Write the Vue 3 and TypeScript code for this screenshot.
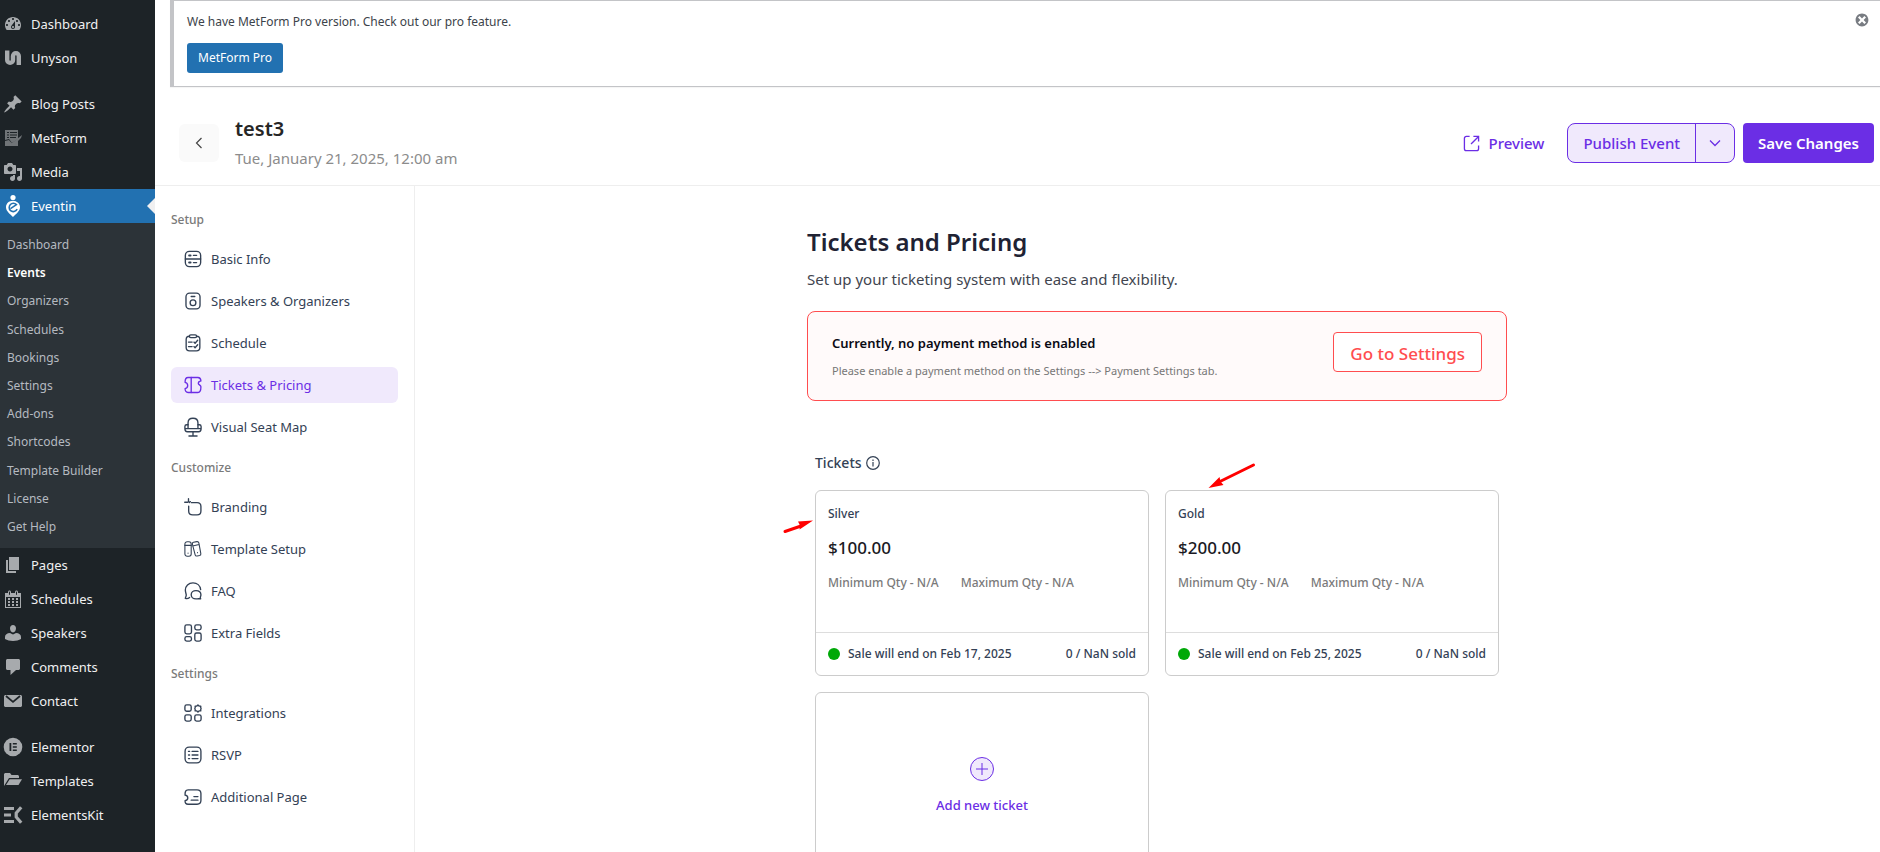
<script setup lang="ts">
interface AdminItem {
  label: string
  icon: string
  startsGroup?: boolean
  active?: boolean
}
interface Step {
  label: string
  icon: string
  active?: boolean
}
interface StepGroup {
  title: string
  steps: Step[]
}
interface Ticket {
  name: string
  price: string
  saleEnd: string
  arrow: string
}

const adminTop: AdminItem[] = [
  { label: 'Dashboard', icon: 'gauge' },
  { label: 'Unyson', icon: 'unyson' },
  { label: 'Blog Posts', icon: 'pin', startsGroup: true },
  { label: 'MetForm', icon: 'metform' },
  { label: 'Media', icon: 'media' },
  { label: 'Eventin', icon: 'eventin', active: true },
]

const eventinMenu: string[] = [
  'Dashboard', 'Events', 'Organizers', 'Schedules', 'Bookings', 'Settings',
  'Add-ons', 'Shortcodes', 'Template Builder', 'License', 'Get Help',
]

const adminBottom: AdminItem[] = [
  { label: 'Pages', icon: 'pages' },
  { label: 'Schedules', icon: 'calendar' },
  { label: 'Speakers', icon: 'person' },
  { label: 'Comments', icon: 'comment' },
  { label: 'Contact', icon: 'mail' },
  { label: 'Elementor', icon: 'elementor', startsGroup: true },
  { label: 'Templates', icon: 'folder' },
  { label: 'ElementsKit', icon: 'elementskit' },
]

const stepGroups: StepGroup[] = [
  {
    title: 'Setup',
    steps: [
      { label: 'Basic Info', icon: 'basic' },
      { label: 'Speakers & Organizers', icon: 'speaker' },
      { label: 'Schedule', icon: 'clipboard' },
      { label: 'Tickets & Pricing', icon: 'ticket', active: true },
      { label: 'Visual Seat Map', icon: 'seat' },
    ],
  },
  {
    title: 'Customize',
    steps: [
      { label: 'Branding', icon: 'branding' },
      { label: 'Template Setup', icon: 'template' },
      { label: 'FAQ', icon: 'faq' },
      { label: 'Extra Fields', icon: 'fields' },
    ],
  },
  {
    title: 'Settings',
    steps: [
      { label: 'Integrations', icon: 'integrations' },
      { label: 'RSVP', icon: 'rsvp' },
      { label: 'Additional Page', icon: 'additional' },
    ],
  },
]

const tickets: Ticket[] = [
  { name: 'Silver', price: '$100.00', saleEnd: 'Sale will end on Feb 17, 2025', arrow: 'left' },
  { name: 'Gold', price: '$200.00', saleEnd: 'Sale will end on Feb 25, 2025', arrow: 'top' },
]

// Solid glyphs on a 20 x 20 grid
const solid: Record<string, string> = {
  gauge: '<path d="M3.76 16h12.48c1.1-1.37 1.76-3.11 1.76-5 0-4.42-3.58-8-8-8s-8 3.58-8 8c0 1.89.66 3.63 1.76 5zM10 4c.55 0 1 .45 1 1s-.45 1-1 1-1-.45-1-1 .45-1 1-1zM6 6c.55 0 1 .45 1 1s-.45 1-1 1-1-.45-1-1 .45-1 1-1zm8 0c.55 0 1 .45 1 1s-.45 1-1 1-1-.45-1-1 .45-1 1-1zm-5.37 5.55L12 7v6c0 1.1-.9 2-2 2s-2-.9-2-2c0-.57.24-1.08.63-1.45zM4 10c.55 0 1 .45 1 1s-.45 1-1 1-1-.45-1-1 .45-1 1-1zm12 0c.55 0 1 .45 1 1s-.45 1-1 1-1-.45-1-1 .45-1 1-1zm-5 3c0-.55-.45-1-1-1s-1 .45-1 1 .45 1 1 1 1-.45 1-1z"/>',
  unyson: '<path d="M4.200 2.500v9.500a2.900 2.900 0 0 0 5.800 0V8a2.900 2.900 0 0 1 5.800 0v9" fill="none" stroke="currentColor" stroke-width="4.400"/>',
  pin: '<path d="M10.44 3.02l1.82-1.82 6.36 6.35-1.83 1.82c-1.05-.68-2.48-.57-3.41.36l-.75.75c-.92.93-1.04 2.35-.35 3.41l-1.83 1.82-2.41-2.41-2.8 2.79c-.42.42-3.38 2.71-3.8 2.29s1.86-3.39 2.28-3.81l2.79-2.79L4.1 9.36l1.83-1.82c1.05.69 2.48.57 3.4-.36l.75-.75c.93-.92 1.05-2.35.36-3.41z"/>',
  metform: '<g opacity=".6"><path d="M2 2h13v9l-6 4-3-4-4 1z"/><path d="M2 13l4-1 3 4 6-4v6H2z"/><path d="M9 15l10-8-1 3-8 8-4-5z"/></g><path d="M4 4h2v1H4zM7 4h7v1H7zM4 6.500h2v1H4zM7 6.500h7v1H7zM4 9h2v1H4zM7 9h6v1H7z" fill="#1d2327"/>',
  media: '<path d="M13 11V4c0-.55-.45-1-1-1h-1.67L9 1H5L3.67 3H2c-.55 0-1 .45-1 1v7c0 .55.45 1 1 1h10c.55 0 1-.45 1-1zM7 4.5c1.380 0 2.500 1.120 2.500 2.500S8.380 9.500 7 9.500 4.500 8.380 4.500 7 5.620 4.500 7 4.500zM14 6h5v10.500c0 1.380-1.120 2.500-2.500 2.500S14 17.880 14 16.500s1.120-2.500 2.500-2.500c.17 0 .34.02.5.05V9h-3V6zm-4 8.050V13h2v3.500c0 1.380-1.120 2.500-2.500 2.500S7 17.880 7 16.500 8.120 14 9.500 14c.17 0 .34.02.5.05z"/>',
  eventin: '<circle cx="10" cy="1.500" r="2.600"/><path d="M10 4.800c-4 0-7 2.800-7 6.400 0 3.800 3.500 6.300 7 9.800 3.500-3.500 7-6 7-9.800 0-3.600-3-6.400-7-6.400z"/><path d="M7.500 12.600L13.400 8.600C11.800 6.800 9 6.800 7.400 8.500c-1.700 1.800-1.600 4.700.2 6.200 2 1.600 5.200 1 6.600-1.500" fill="none" stroke="#2271b1" stroke-width="1.600"/><path d="M13.300 4.500l4.500 3.500" stroke="#2271b1" stroke-width="1.200"/>',
  pages: '<path d="M6 15V2h10v13H6zm-1 1h8v2H3V5h2v11z"/>',
  calendar: '<path d="M15 4h3v15H2V4h3V3c0-.41.15-.76.44-1.06.29-.29.65-.44 1.060-.44s.77.15 1.060.44c.29.3.44.65.44 1.060v1h4V3c0-.41.15-.76.44-1.060.29-.29.65-.44 1.060-.44s.77.15 1.060.44c.29.3.44.65.44 1.060v1zM6 3v2.500c0 .14.05.26.15.36.09.09.21.14.35.14s.26-.05.35-.14c.1-.1.15-.22.15-.36V3c0-.14-.05-.26-.15-.35-.09-.1-.21-.15-.35-.15s-.26.05-.35.15c-.1.09-.15.21-.15.35zm7 0v2.500c0 .14.05.26.14.36.1.09.22.14.36.14s.26-.05.36-.14c.09-.1.14-.22.14-.36V3c0-.14-.05-.26-.14-.35-.1-.1-.22-.15-.36-.15s-.26.05-.36.15c-.09.09-.14.21-.14.35zm4 15V8H3v10h14zM7 9v2H5V9h2zm2 0h2v2H9V9zm4 2V9h2v2h-2zm-6 1v2H5v-2h2zm2 0h2v2H9v-2zm4 2v-2h2v2h-2zm-6 1v2H5v-2h2zm4 2H9v-2h2v2zm4 0h-2v-2h2v2z"/>',
  person: '<path d="M10 9.500c-1.800 0-3-2-3-4.200C7 3.300 8.200 2 10 2s3 1.300 3 3.300c0 2.200-1.200 4.200-3 4.200zM7 10l3 1.500 3-1.500c3 .2 5 1.500 5 4v2c-2 1.300-5 2-8 2s-6-.7-8-2v-2c0-2.500 2-3.800 5-4z"/>',
  comment: '<path d="M4.500 2h11c.8 0 1.500.7 1.500 1.500v8c0 .8-.7 1.500-1.500 1.500H13l-5.500 5v-5h-3c-.8 0-1.500-.7-1.500-1.500v-8C3 2.700 3.700 2 4.500 2z"/>',
  mail: '<path d="M2 4h16l1 1v10l-1 1H2l-1-1V5z"/><path d="M3 5l7 6 7-6" fill="none" stroke="#1d2327" stroke-width="1.700"/>',
  elementor: '<circle cx="10" cy="10" r="9.300"/><path d="M6.500 6h1.800v8H6.500zM9.800 6h4v1.600h-4zM9.800 9.200h4v1.600h-4zM9.800 12.400h4V14h-4z" fill="#1d2327"/>',
  folder: '<path d="M1 15V3l1-1h5l1.500 2H15l1 1v2H6z"/><path d="M6.700 8.200H19L15.500 14H3z"/>',
  elementskit: '<path d="M1 2h10v3H1zM1 8.500h7v3H1zM1 15h10v3H1z"/><path d="M18.200 2.200l-5 5.800v4l5 5.800" fill="none" stroke="currentColor" stroke-width="3.200"/>',
}

// Outline glyphs on a 20 x 20 grid
const outline: Record<string, string> = {
  basic: '<rect x="1.500" y="1.500" width="17" height="17" rx="4.500"/><path d="M1.500 10h17M10.500 6H14M10.500 14H14"/><path d="M5.700 6h1.600M5.700 14h1.600" stroke-width="2.200"/>',
  speaker: '<rect x="2.200" y="1.200" width="15.600" height="17.600" rx="4"/><circle cx="10" cy="12" r="3.200"/><path d="M8 5h4"/>',
  clipboard: '<path d="M6 2.500c-2.500 0-3.600 1.200-3.600 3.500v9c0 2.500 1.200 3.800 3.800 3.800h7.600c2.600 0 3.800-1.300 3.800-3.800V6c0-2.300-1.100-3.500-3.600-3.500"/><rect x="6" y="1" width="8" height="3" rx="1.500"/><path d="M5 9h4M5 14h4M11 9l1.300 1.200L15.200 7M11 14l1.300 1.200 2.900-3.200"/>',
  ticket: '<path d="M4.500 1.700h11c2 0 3.100 1.200 3.300 3.800-1.800.4-2.900 1.400-2.900 2.700 0 1.500 2.900 1.800 2.900 3.800 0 4.300-1.200 6.300-3.300 6.300h-11c-2.100 0-3.300-1.800-3.300-4.300 1.900-.4 2.900-1.600 2.900-3.500S3 7.400 1.200 7C1.200 3.500 2.400 1.700 4.500 1.700z"/><path d="M8 1.700v16.600"/>',
  seat: '<path d="M4.500 11.500V5.500C4.500 2 6 .3 10 .3s5.500 1.700 5.500 5.200v6"/><path d="M4.500 7.500H3c-1.300 0-2 .7-2 2V12c0 2.200.8 3.300 2.800 3.300h12.400c2 0 2.800-1.100 2.800-3.300V9.500c0-1.300-.7-2-2-2h-1.500M1.500 11.800h17M10 15.300V20M5.500 20h9"/>',
  branding: '<path d="M8.200 5.200h6.300c3 0 4.300 1.200 4.300 4.300v5c0 3-1.300 4.300-4.300 4.300h-4.800c-3 0-4.500-1.300-4.500-4.300V9"/><path d="M5 .7V4M.8 4.700h3.500M6 5l1-1"/>',
  template: '<g stroke-width="1.200"><rect x="1" y="2" width="7" height="16" rx="2.500"/><path d="M1 6h7M10.500 2.600l3.800-.8c1.200-.2 1.900.3 2.200 1.500l2.200 11.800c.2 1.200-.2 1.800-1.300 2.100l-2.800.6c-1.100.2-1.900-.2-2.200-1.400L9.300 4.700c-.2-1.200.2-1.900 1.200-2.100zM9.700 6.700l7-1.600M4.500 14.500v.2M15 14v.2"/></g>',
  faq: '<path d="M18.500 8.500C18 4 14.500 1 10 1 5 1 1.500 4.500 1.500 9c0 2.500 1 4 1 5.500s-1 2.500-1 3.700c1.500.4 3.500 0 4.700-1"/><path d="M13.300 9.500c3.200 0 5.500 2 5.500 4.800 0 1.500-.7 2-.7 3 0 .8.400 1 .4 1.400-1 .3-1.700-.2-2.500-.2-.6.200-1.600.3-2.700.3-3.100 0-5.300-2-5.300-4.700 0-2.600 2.200-4.600 5.300-4.600z"/>',
  fields: '<rect x="1" y="1" width="7.300" height="10" rx="2"/><rect x="12" y="1" width="7" height="5.500" rx="2"/><rect x="1" y="14" width="7.300" height="5" rx="2"/><rect x="12" y="10" width="7" height="9" rx="2"/>',
  integrations: '<rect x="1" y="1" width="7" height="7" rx="2"/><rect x="1" y="12" width="7" height="7" rx="2"/><rect x="12" y="12" width="7" height="7" rx="2"/><path d="M15.500 1l1.200 1.300h1.900v1.900L19 5l-.4 1v1.700h-1.900L15.500 9l-1.200-1.300h-1.900V6L12 5l.4-.8V2.300h1.900z"/>',
  rsvp: '<rect x="1.200" y="1.200" width="17.600" height="17.600" rx="4.500"/><path d="M9 6h6.500M9 10h6.500M9 14h6.500M5 6h1.200M5 10h1.200M5 14h1.200"/>',
  additional: '<path d="M4.500 2h10c3 0 4.300 1.300 4.300 4v8c0 2.700-1.300 4-4.300 4h-10C2 18 1 16.500 1.200 14c2-.4 3-1.400 3-3S3 8.200 1.200 8C1 4 2 2 4.500 2zM11 9.500h4.500M8 13.500h7.500"/>',
}
</script>

<template>
  <div class="screen">
    <nav class="admin" aria-label="Admin menu">
      <a
        v-for="item in adminTop"
        :key="item.label"
        href="#"
        class="admin-link"
        :class="{ 'starts-group': item.startsGroup, current: item.active }"
      >
        <svg class="admin-icon" viewBox="0 0 20 20" fill="currentColor" aria-hidden="true" v-html="solid[item.icon]"></svg>
        <span>{{ item.label }}</span>
      </a>
      <div class="submenu">
        <a v-for="name in eventinMenu" :key="name" href="#" :class="{ chosen: name === 'Events' }">{{ name }}</a>
      </div>
      <a
        v-for="item in adminBottom"
        :key="item.label"
        href="#"
        class="admin-link"
        :class="{ 'starts-group': item.startsGroup }"
      >
        <svg class="admin-icon" viewBox="0 0 20 20" fill="currentColor" aria-hidden="true" v-html="solid[item.icon]"></svg>
        <span>{{ item.label }}</span>
      </a>
    </nav>

    <div class="page">
      <section class="notice">
        <div class="notice-body">
          <p>We have MetForm Pro version. Check out our pro feature.</p>
          <a href="#" class="pro-button">MetForm Pro</a>
        </div>
        <button type="button" class="dismiss" aria-label="Dismiss this notice">
          <svg viewBox="0 0 20 20" fill="currentColor"><path d="M10 2c4.420 0 8 3.580 8 8s-3.580 8-8 8-8-3.580-8-8 3.580-8 8-8zm5 11l-3-3 3-3-2-2-3 3-3-3-2 2 3 3-3 3 2 2 3-3 3 3z" /></svg>
        </button>
      </section>

      <header class="event-bar">
        <button type="button" class="back" aria-label="Back">
          <svg viewBox="0 0 12 12" fill="none" stroke="currentColor" stroke-width="1.200"><path d="M8.500 1L3.500 6l5 5" /></svg>
        </button>
        <div class="event-name">
          <h1>test3</h1>
          <p>Tue, January 21, 2025, 12:00 am</p>
        </div>
        <a href="#" class="preview">
          <svg viewBox="0 0 18 18" fill="none" stroke="currentColor" stroke-width="1.400"><path d="M7 1.500H3.500a2 2 0 0 0-2 2v11a2 2 0 0 0 2 2h11a2 2 0 0 0 2-2V11M8.500 9.500l8-8M11 1.500h5.500V7" /></svg>
          <span>Preview</span>
        </a>
        <div class="publish">
          <button type="button" class="publish-main">Publish Event</button>
          <button type="button" class="publish-more" aria-label="More publish options">
            <svg viewBox="0 0 12 12" fill="none" stroke="currentColor" stroke-width="1.300"><path d="M1 3.500l5 5 5-5" /></svg>
          </button>
        </div>
        <button type="button" class="save">Save Changes</button>
      </header>

      <div class="workspace">
        <nav class="steps" aria-label="Event steps">
          <section v-for="group in stepGroups" :key="group.title">
            <h2>{{ group.title }}</h2>
            <a v-for="step in group.steps" :key="step.label" href="#" :class="{ active: step.active }">
              <svg viewBox="0 0 20 20" fill="none" stroke="currentColor" stroke-width="1.500" stroke-linecap="round" stroke-linejoin="round" aria-hidden="true" v-html="outline[step.icon]"></svg>
              <span>{{ step.label }}</span>
            </a>
          </section>
        </nav>

        <main>
          <div class="column">
            <h2 class="title">Tickets and Pricing</h2>
            <p class="lead">Set up your ticketing system with ease and flexibility.</p>

            <div class="alert" role="alert">
              <div>
                <strong>Currently, no payment method is enabled</strong>
                <p>Please enable a payment method on the Settings --&gt; Payment Settings tab.</p>
              </div>
              <button type="button">Go to Settings</button>
            </div>

            <section class="tickets">
              <h3>
                <span>Tickets</span>
                <svg viewBox="0 0 14 14" fill="none" stroke="currentColor" aria-hidden="true"><circle cx="7" cy="7" r="6.300" stroke-width="1.200" /><path d="M7 6v4.500M7 3.500V5" stroke-width="1.200" /></svg>
              </h3>
              <div class="grid">
                <article v-for="ticket in tickets" :key="ticket.name" class="card">
                  <div class="card-body">
                    <h4>{{ ticket.name }}</h4>
                    <p class="price">{{ ticket.price }}</p>
                    <p class="qty"><span>Minimum Qty - N/A</span><span>Maximum Qty - N/A</span></p>
                  </div>
                  <footer>
                    <i class="dot"></i>
                    <span>{{ ticket.saleEnd }}</span>
                    <span class="sold">0 / NaN sold</span>
                  </footer>
                  <svg v-if="ticket.arrow === 'left'" class="arrow-left" viewBox="0 0 31 14" fill="#f00" aria-hidden="true">
                    <path d="M2 11.500L18 6" stroke="#f00" stroke-width="3" stroke-linecap="round" />
                    <path d="M30 .5L15 1.500l2 4L16.500 9.500z" />
                  </svg>
                  <svg v-else class="arrow-top" viewBox="0 0 48 26" fill="#f00" aria-hidden="true">
                    <path d="M45.500 2L12 18.500" stroke="#f00" stroke-width="3" stroke-linecap="round" />
                    <path d="M.5 25L11.500 14l1 4.500 3 3.500z" />
                  </svg>
                </article>
                <button type="button" class="card add">
                  <svg viewBox="0 0 24 24" fill="#f0e9fc" stroke="currentColor" aria-hidden="true"><circle cx="12" cy="12" r="11.500" /><path d="M12 6v12M6 12h12" /></svg>
                  <span>Add new ticket</span>
                </button>
              </div>
            </section>
          </div>
        </main>
      </div>
    </div>
  </div>
</template>

<style>
body {
  margin: 0;
  background: #fff;
}
</style>

<style scoped>
.screen {
  display: flex;
  height: 100vh;
  overflow: hidden;
  font-family: 'Noto Sans', 'Open Sans', sans-serif;
  font-size: 13px;
  line-height: 20px;
  color: #3c434a;
}
.screen * {
  box-sizing: border-box;
}
h1, h2, h3, h4, p {
  margin: 0;
}
a {
  text-decoration: none;
}
button {
  font-family: inherit;
  cursor: pointer;
}
svg {
  display: block;
  flex: none;
  overflow: visible;
}

.admin {
  flex: none;
  width: 155px;
  padding-top: 7px;
  background: #1d2327;
}
.admin-link {
  display: flex;
  align-items: center;
  gap: 8px;
  height: 34px;
  padding-left: 3px;
  color: #f0f0f1;
}
.admin-link.starts-group {
  margin-top: 12px;
}
.admin-icon {
  width: 20px;
  height: 20px;
  color: #a7aaad;
}
.current {
  position: relative;
  background: #2271b1;
  color: #fff;
}
.current .admin-icon {
  color: #fff;
}
.current::after {
  content: '';
  position: absolute;
  right: 0;
  top: 9px;
  border: 8px solid transparent;
  border-left-width: 0;
  border-right-color: #f0f0f1;
}
.submenu {
  display: flex;
  flex-direction: column;
  justify-content: space-between;
  min-height: 325px;
  padding: 8px 7px 7px;
  background: #2c3338;
  font-size: 12px;
}
.submenu a {
  line-height: 28px;
  color: #b5bac0;
}
.submenu .chosen {
  color: #fff;
  font-weight: 600;
}

.page {
  flex: 1;
  min-width: 0;
  display: flex;
  flex-direction: column;
}
.notice {
  display: flex;
  justify-content: space-between;
  align-items: flex-start;
  margin-left: 15px;
  padding: 11px 10px 13px 13px;
  border: 1px solid #c3c4c7;
  border-left-width: 4px;
  border-right: 0;
  box-shadow: 0 1px 1px rgba(0, 0, 0, 0.04);
  font-size: 12px;
}
.pro-button {
  display: inline-block;
  margin-top: 11px;
  padding: 0 11px;
  border-radius: 3px;
  background: #2271b1;
  color: #fff;
  line-height: 30px;
}
.dismiss {
  padding: 0;
  border: 0;
  background: none;
  color: #787c82;
}
.dismiss svg {
  width: 16px;
  height: 16px;
}

.event-bar {
  display: flex;
  align-items: center;
  height: 99px;
  padding: 14px 6px 0 24px;
  border-bottom: 1px solid #eee;
}
.back {
  display: grid;
  place-items: center;
  width: 40px;
  height: 38px;
  padding: 0;
  border: 0;
  border-radius: 6px;
  background: #fafafa;
  color: #444;
}
.back svg {
  width: 12px;
  height: 12px;
}
.event-name {
  flex: 1;
  margin-left: 16px;
}
h1 {
  font-size: 20px;
  line-height: 30px;
  font-weight: 600;
  color: #262626;
}
.event-name p {
  font-size: 15px;
  line-height: 28px;
  color: #8c8c8c;
}
.preview {
  display: flex;
  align-items: center;
  gap: 9px;
  margin-right: 23px;
  font-size: 15px;
  font-weight: 500;
  color: #6b2ee5;
}
.preview svg {
  width: 17px;
  height: 17px;
}
.publish {
  display: flex;
  height: 40px;
  margin-right: 8px;
  border: 1px solid #6b2ee5;
  border-radius: 8px;
  background: #f0e9fc;
}
.publish button {
  border: 0;
  background: none;
  color: #6b2ee5;
}
.publish .publish-main {
  padding: 0 15px;
  font-size: 15px;
  font-weight: 500;
}
.publish .publish-more {
  display: grid;
  place-items: center;
  width: 39px;
  padding: 0;
  border-left: 1px solid #6b2ee5;
}
.publish-more svg {
  width: 12px;
  height: 12px;
}
.save {
  height: 40px;
  padding: 0 15px;
  border: 0;
  border-radius: 4px;
  background: #6b2ee5;
  color: #fff;
  font-size: 15px;
  font-weight: 600;
}

.workspace {
  flex: 1;
  min-height: 0;
  display: flex;
}
.steps {
  flex: none;
  width: 260px;
  padding: 24px 16px;
  border-right: 1px solid #eee;
}
.steps section {
  display: flex;
  flex-direction: column;
  gap: 6px;
  margin-bottom: 13px;
}
.steps h2 {
  margin-bottom: 5px;
  font-size: 12px;
  line-height: 20px;
  font-weight: 500;
  color: #7a7a7a;
}
.steps a {
  display: flex;
  align-items: center;
  gap: 9px;
  height: 36px;
  padding-left: 13px;
  border-radius: 6px;
  color: #334155;
}
.steps svg {
  width: 18px;
  height: 18px;
}
.steps .active {
  background: #f0e9fc;
  color: #6b2ee5;
}

main {
  flex: 1;
  min-width: 0;
  padding: 38px 0 0 19px;
}
.column {
  max-width: 700px;
  margin: 0 auto;
}
.title {
  font-size: 24px;
  line-height: 36px;
  font-weight: 600;
  color: #202233;
}
.lead {
  margin-top: 7px;
  font-size: 15px;
  line-height: 24px;
  color: #41454f;
}
.alert {
  display: flex;
  justify-content: space-between;
  align-items: flex-start;
  margin-top: 20px;
  padding: 20px 24px;
  border: 1px solid #ff4d4f;
  border-radius: 8px;
  background: #fffafa;
}
.alert strong {
  display: block;
  line-height: 22px;
  font-weight: 600;
  color: #0a0a14;
}
.alert p {
  margin-top: 8px;
  font-size: 11px;
  line-height: 18px;
  color: #777;
}
.alert button {
  height: 40px;
  padding: 3px 16px 0;
  border: 1px solid #ff4d4f;
  border-radius: 4px;
  background: #fff;
  color: #ff4d4f;
  font-size: 17px;
  font-weight: 500;
}
.tickets {
  padding: 50px 8px 0;
}
h3 {
  display: flex;
  align-items: center;
  gap: 4px;
  font-size: 14px;
  line-height: 24px;
  font-weight: 500;
  color: #334155;
}
h3 svg {
  width: 14px;
  height: 14px;
}
.grid {
  display: grid;
  grid-template-columns: 1fr 1fr;
  gap: 16px;
  margin-top: 15px;
}
.card {
  position: relative;
  display: flex;
  flex-direction: column;
  min-height: 186px;
  border: 1px solid #ccc;
  border-radius: 6px;
  background: #fff;
  font-size: 12px;
  font-weight: 500;
}
.card-body {
  flex: 1;
  padding: 13px 12px;
}
h4 {
  font-size: 12px;
  line-height: 20px;
  font-weight: 500;
  color: #334155;
}
.price {
  margin-top: 9px;
  font-size: 17px;
  line-height: 30px;
  color: #1a1a24;
}
.qty {
  display: flex;
  gap: 22px;
  margin-top: 10px;
  color: #7a7a7a;
}
.card footer {
  display: flex;
  align-items: center;
  gap: 8px;
  height: 43px;
  padding: 0 12px;
  border-top: 1px solid #ddd;
  color: #334155;
}
.dot {
  width: 12px;
  height: 12px;
  border-radius: 50%;
  background: #00a908;
}
.sold {
  margin-left: auto;
}
.arrow-left {
  position: absolute;
  width: 31px;
  height: 14px;
  top: 29px;
  right: 100%;
  margin-right: 2px;
}
.arrow-top {
  position: absolute;
  width: 48px;
  height: 26px;
  left: 42px;
  bottom: 100%;
  margin-bottom: 2px;
}
.add {
  align-items: center;
  justify-content: center;
  gap: 15px;
  color: #6b2ee5;
  font-size: 13px;
}
.add svg {
  width: 24px;
  height: 24px;
}
</style>
